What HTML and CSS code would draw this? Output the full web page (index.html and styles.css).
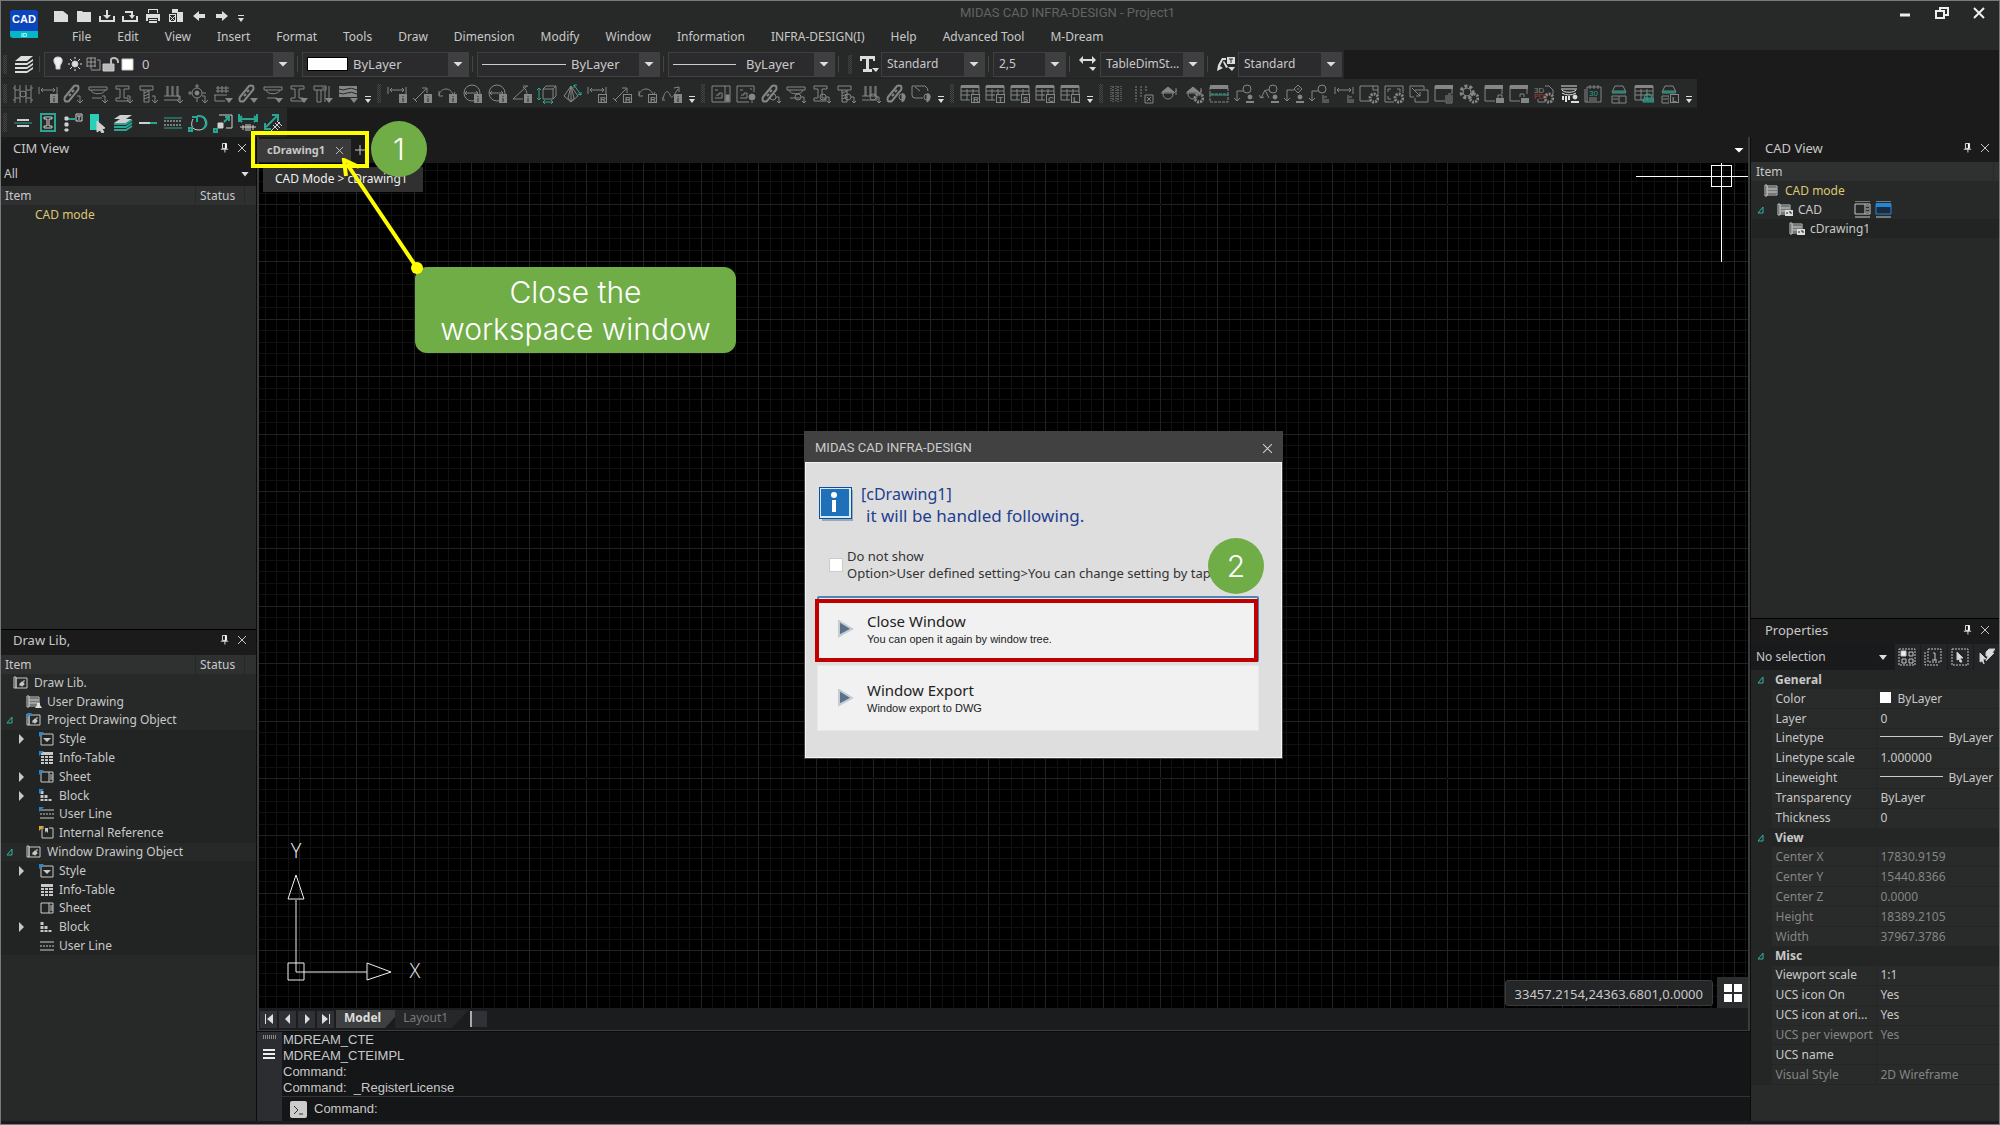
FILE: index.html
```html
<!DOCTYPE html>
<html lang="en">
    <head>
        <title>MIDAS CAD INFRA-DESIGN - Project1</title>

        <meta name="viewport" content="width=device-width" />
        <meta charset="UTF-8" />

        <link rel="stylesheet" href="styles.css">
    </head>

    <body>
        <svg class="sprite">
            <defs>
                <!-- toolbar shapes, 20x20 -->
                <g id="column"><path d="M2 1v18M18 1v18M2 6h5M2 14h5M13 6h5M13 14h5M7 1v18M13 1v18M0 4h2M0 16h2M18 4h2M18 16h2" /><circle cx="10" cy="10" r="3" /></g>
                <g id="dim"><path d="M1 3v7M19 3v7M3 6h14M5 4 3 6l2 2M15 4l2 2-2 2" /></g>
                <g id="diag"><path d="M3 16 14 5M10 4h5v5M1 14l4 4" /></g>
                <g id="arc"><path d="M2 11c2-8 12-8 14 0M2 7v5h4M13 10l3 2 2-4" /></g>
                <g id="circledim"><circle cx="10" cy="9" r="8" /><path d="M3 9h13M5 7 3 9l2 2M14 7l2 2-2 2" /></g>
                <g id="angle"><path d="M1 15 15 2M1 15h10M11 3c3 2 4 5 4 8M11 2l5 0" /></g>
                <g id="cube"><path d="M6 5h10v10H6zM6 5l3-3h10v10l-3 3M16 5l3-3" /><path class="teal" d="M2 4v12M0 6l2-2 2 2M0 14l2 2 2-2M6 18h10M8 16l-2 2 2 2M14 16l2 2-2 2" /></g>
                <g id="pyramid"><path d="M9 2 2 12l7 6 7-6zM9 2v16M9 2l-3 12 3 4 3-4z" /><path class="teal" d="m12 1 7 10M12 4V1h3M16 10l3 1V8" /></g>
                <g id="spline"><path d="M1 15c2-9 5-9 7-4s4 0 8-6M12 4l5-1v5M0 13v3h3" /></g>
                <g id="bar"><path d="m2 13 9-11q2-1 4 0 1 2 0 4L6 17q-2 1-4 0-1-2 0-4zM6 12l2-2M9 8l2-2" stroke-width="2" /></g>
                <g id="deck"><path d="M1 3h18v3H1zM3 6c1 5 13 5 14 0M4 14h10" /></g>
                <g id="ibeam"><path d="M3 2h13v3h-5v9h4v3H3v-3h4V5H3z" /></g>
                <g id="pile"><path d="M2 2h13v4H2zM6 6v12h5V6M6 9l5-2M6 12l5-2M6 15l5-2" /></g>
                <g id="pile2"><path d="M1 2h12v4H1zM4 6v12h4V6M12 6v12M16 2v14M9 4l4 0" /></g>
                <g id="piles"><path d="M4 2v10M9 2v10M14 2v10M1 12h15v4H1M5 2v10M10 2v10M15 2v10" /></g>
                <g id="hatch"><path d="M5 2v7M9 2v7M13 2v7M3 4h13M3 7h13M1 11h13M2 11v6h10" /></g>
                <g id="target"><circle cx="9" cy="9" r="5" /><circle cx="9" cy="9" r="2" fill="currentColor" /><path d="M9 0v4M9 14v4M0 9h4M14 9h4M7 2h4M2 7v4" /></g>
                <g id="terrain"><path d="M1 2h18v11H1z" fill="currentColor" stroke="none" /><path d="M1 5q4 2 8 0t10 1M1 9q4 2 8 0t10 1" stroke="#272928" /></g>
                <g id="frame"><path d="M1 2h18v16H1zM14 2v16M4 6h3M4 14h7V9H8v2h-3" /><path d="M15 11h3v6h-3z" fill="currentColor" /></g>
                <g id="frame2"><path d="M13 18H1V2h17v6M4 6h3M4 14h7V9H8v2h-3M14 5h2" /></g>
                <g id="gauge"><path d="M12 14H4q-3 0-3-3V2h13q3 2 3 5M4 3l5 4" /></g>
                <g id="table"><path d="M1 2h18v14H1zM1 7h18M1 11h18M7 5v11M13 5v11" /><path d="M1 1h18v3H1z" fill="currentColor" stroke="none" /></g>
                <g id="vlines"><path d="M2 2v16M7 2v16M12 2v16" stroke-dasharray="1 1" /><path d="M4 2v16M9 2v16" stroke-dasharray="2 1" /></g>
                <g id="vlinesx"><path d="M2 2v16M7 2v12M12 2v6" stroke-dasharray="2 1" /></g>
                <g id="section"><path d="M2 9h13M15 9l3-3M17 4v7" /><circle cx="9" cy="10" r="5" /><path d="M3 8 9 3l6 5z" fill="currentColor" /></g>
                <g id="split"><path d="M1 2h18v8H1zM1 10v8h18v-8" stroke-dasharray="3 1" /><path d="M1 1h18v4H1z" fill="currentColor" stroke="none" /><path class="teal" d="M1 11h18" /></g>
                <g id="leader"><circle cx="13" cy="5" r="4" /><path d="M9 7H3v10M0 14l3 3 3-3" /></g>
                <g id="leader2"><circle cx="14" cy="5" r="4" /><path d="M2 14 6 6l4 8M7 6h3M0 11l2 3 3-1" /></g>
                <g id="leader3"><path d="m14 1 4 4-4 4-4-4zM10 6H3v11M0 14l3 3 3-3M13 5h2" /></g>
                <g id="sheet"><path d="M11 17H1V2h18v8M14 2v4h5" /></g>
                <g id="corners"><path d="M10 18H1V2h18v7M4 8V5h3M13 5h3v3M4 12v3h3" /></g>
                <g id="export"><path d="M5 13H1V2h14v3M6 6h13v12H6v-4M3 4l8 8M7 12h4V8" /></g>
                <g id="window"><path d="M11 17H1V2h17v8" /><path d="M1 1h18v4H1z" fill="currentColor" stroke="none" /></g>
                <g id="gears"><circle cx="8" cy="8" r="6" stroke-width="3" stroke-dasharray="3 2" /><circle cx="8" cy="8" r="4" /></g>
                <g id="pdf"><path d="M11 2h4l4 4v4M4 15v3h7" /><text x="0" y="9" font-size="8">3D</text><text class="red" x="0" y="15" font-size="7">PDF</text></g>
                <g id="bridge"><path d="M2 2h16M2 5h16M3 6c2 3 12 3 14 0M3 9q7 4 14 0" /><path d="M4 12v4M7 12v6M10 12v4" stroke-width="2" /></g>
                <g id="book"><path d="M3 3h14v15H3zM6 1v4M10 1v4M14 1v4M1 5v13h2M5 14h8M5 16h8" /><text class="tealtext" x="5" y="12" font-size="8">30</text></g>
                <g id="hat"><path d="M3 12h14v7H3zM10 12v7M4 15h5" /><path d="m6 2-3 6h14l-3-6z" /><path class="teal" d="M3 9h14M4 7h12" /></g>
                <g id="hatsmall"><path class="teal" d="m12 10-2 4h8l-2-4zM9 17h11" /><path class="teal" d="M9 15h11v3H9z" /></g>

                <!-- corner badges -->
                <g id="info"><path d="M12 10h8v9h-8z" fill="currentColor" stroke="none" /><path d="M16 12v1M16 14v4" stroke="#272928" /></g>
                <g id="down"><path d="M14 12h3v6M14 16l3 3 3-3" /></g>
                <g id="menu"><path d="M12 14h8l-4 5z" fill="currentColor" stroke="none" /></g>
                <g id="bulb"><circle cx="16" cy="13" r="3" fill="currentColor" /><path d="M15 18h2" /></g>
                <g id="half"><circle cx="16" cy="13" r="3" /><path d="M16 10v8q3-1 3-5t-3-3z" fill="currentColor" /></g>
                <g id="spin"><circle cx="12" cy="13" r="3" /><path d="M15 13h3v5M16 17l2 2 2-2" /></g>
                <g id="gear"><circle cx="15" cy="14" r="4" stroke-width="3" stroke-dasharray="2 1" /><circle cx="15" cy="14" r="2" fill="#272928" stroke="none" /></g>
                <g id="person"><circle cx="16" cy="13" r="2" fill="currentColor" /><path d="M12 17h8v2h-8z" fill="currentColor" stroke="none" /></g>
                <g id="list"><path d="M14 11v8M15 13h3M15 16h5M15 18h5" /></g>
                <g id="lock"><path d="M12 14h8v5h-8z" fill="currentColor" stroke="none" /><path d="M14 14v-3h4v3" /></g>
                <g id="unlock"><path d="M12 14h8v5h-8z" fill="currentColor" stroke="none" /><path d="M11 13v-3h4v3" /></g>
                <g id="trash"><path d="M11 12h8M12 13v6h6v-6M14 13v5M16 13v5M14 10h3" /></g>
                <g id="cross"><path d="M11 11h8v8h-8zM13 13l4 4M17 13l-4 4" /></g>

                <!-- second toolbar line -->
                <g id="centerline"><path d="M4 7h12M4 13h12" stroke-width="2" /><path class="teal" d="M1 10h18" /></g>
                <g id="boxbeam"><path class="teal" d="M3 1h14v17H3z" stroke-width="2" /><path d="M6 4h8v2h-3v7h3v2H6v-2h3V6H6z" /></g>
                <g id="tag"><path class="teal" d="M4 6h8" stroke-width="2" /><path d="M2 4h3v3H2zM2 10h3v3H2zM2 16h3v2H2z" fill="currentColor" /><path d="M13 1h6v7h-6zM14 3h4M16 3v4" /></g>
                <g id="pick"><path class="tealfill" d="M2 1h9v16H2z" /><path d="m9 8 8 7-3 1 2 3-2 1-2-3-3 2z" fill="currentColor" /></g>
                <g id="stack"><path d="M7 2h12l-6 4H1zM7 6h12l-6 4H1z" fill="currentColor" stroke="none" /><path class="teal" d="M1 11h12l6-4M1 14h12l6-4M1 17h12l6-4" stroke-width="2" /></g>
                <g id="line1"><path d="M1 10h11" stroke-width="2" /><path class="teal" d="M12 10h7" stroke-width="2" /></g>
                <g id="lines"><path class="teal" d="M1 5h18M1 15h18" /><path d="M1 8h18M1 12h18" stroke-dasharray="2 1" /></g>
                <g id="rotate"><path d="M9 3c11-1 11 14 2 14S3 10 5 6" /><path class="teal" d="M9 3c10-1 12 9 6 13M4 4h5v5M1 15h3v3H1z" stroke-width="2" /></g>
                <g id="scale"><path d="M6 2h13v13h-6" /><path d="M5 10h5v5H5z" fill="currentColor" /><path class="teal" d="m11 9 5-5M12 4h4v4M1 16h3v3H1z" stroke-width="2" /></g>
                <g id="spread"><path class="teal" d="M1 6h18M4 3 1 6l3 3M16 3l3 3-3 3M1 1v8M19 1v8" stroke-width="2" /><path d="M2 14h16M5 12v5M8 11v7M10 11v7M12 11v7M15 12v5" /></g>
                <g id="spread2"><path class="teal" d="M3 14 14 3M9 2h6v6M2 10v6h6" stroke-width="2" /><path d="m7 19 10-10M10 12l5 5M12 10l5 5M14 8l5 5" /></g>

                <!-- panel chrome -->
                <g id="pin"><path d="M3 1h5v6H3zM1 8h9M6 8v4" /><path d="M7 1v6" stroke-width="2" /></g>
                <g id="close"><path d="m1 1 8 8M9 1 1 9" /></g>
                <g id="open"><path d="M6 1v6H1z" /></g>
                <g id="closed"><path d="M1 0v10l5-5z" fill="currentColor" stroke="none" /></g>

                <!-- tree icons, 16x14 -->
                <g id="t-lib"><path d="M3 2h11v10H3zM1 1h2v11H1zM7 8h3V5h2M6 9h2" /><path d="M7 6h4v4H7z" fill="currentColor" stroke="none" transform="rotate(45 9 8)" /></g>
                <g id="t-draw"><path d="M1 1h2v11H1zM3 2h10v9H3zM5 3v7M7 3v7M9 3v7M11 3v7M3 5h10M3 8h10" /></g>
                <g id="t-user"><path d="M11 8h3v2l2 3H9l2-3z" fill="#ddd" stroke="none" /></g>
                <g id="t-ad"><path d="M8 7h8v6H8z" fill="#ddd" stroke="none" /><path d="M10 9v2M12 9h2v2" stroke="#222" /></g>
                <g id="t-style"><path d="M3 2h12v11H3z" /><path d="M5 6h8l-4 4z" fill="currentColor" stroke="none" /></g>
                <g id="t-table"><path d="M3 1h12v3H3z" fill="currentColor" stroke="none" /><path d="M3 6h3M3 9h3M3 12h3M7 6h3M7 9h3M7 12h3M11 6h4M11 9h4M11 12h4" stroke-width="2" /></g>
                <g id="t-sheet"><path d="M3 2h12v10H3zM11 2v10M12 5h3M12 7h3M12 9h3" /></g>
                <g id="t-block"><path d="M4 2v10M8 6v6M12 10v2" stroke-width="3" stroke-dasharray="3 1" /></g>
                <g id="t-line"><path d="M2 3h14M2 11h14" /><path d="M2 7h14" stroke-dasharray="2 1" /></g>
                <g id="t-ref"><path d="M6 2H4v10h11V2h-4" /><path d="M7 2h3v5L8 5 7 7z" fill="currentColor" stroke="none" /></g>
                <g id="t-mark"><path d="M1 0h5L1 5z" fill="#1f87d6" stroke="none" /></g>
                <g id="t-mark2"><path d="M1 0h5L1 5z" fill="#e0a92a" stroke="none" /></g>
            </defs>
        </svg>

        <div class="app">
            <header class="titlebar">
                <svg class="logo" viewBox="0 0 28 28">
                    <path d="M0 3q0-3 3-3h22q3 0 3 3v18H0z" fill="#0b46bd" />
                    <path d="M0 21h28v7H3q-3 0-3-3z" fill="#06b6c4" />
                    <text x="14" y="13" class="logo-name">CAD</text>
                    <text x="14" y="27" class="logo-sub">ID</text>
                </svg>
                <div class="titlebar-main">
                    <div class="quick">
                        <button aria-label="New"><svg viewBox="0 0 16 14"><path d="M1 2h9l5 4v7H1z" /></svg></button>
                        <button aria-label="Open"><svg viewBox="0 0 16 14"><path d="M1 2h5l1 1h8v10H1z" /></svg></button>
                        <button aria-label="Save"><svg viewBox="0 0 16 14"><path d="M0 7h2v4h12V7h2v6H0zM7 1h2v5h3L8 10 4 6h3z" /></svg></button>
                        <button aria-label="Save as"><svg viewBox="0 0 16 14"><path d="M0 7h2v4h12V7h2v6H0zM3 2h8v4h2l-3 4-3-4h2V4H3z" /></svg></button>
                        <button aria-label="Print"><svg viewBox="0 0 16 14"><path d="M3 0h10v4h-1V1H4v3H3zM1 5h14v7h-2V9H3v3H1zM4 10h8v1H4zM4 12h8v2H4z" /></svg></button>
                        <button aria-label="Plot"><svg viewBox="0 0 16 14"><path d="M4 0h6v3h5v10H9V4H4zM1 5h7v8H1zM2 6v6h5V6z" fill-rule="evenodd" /><path d="m2 7 5 5M7 7l-5 5" stroke="#ddd" /></svg></button>
                        <button aria-label="Undo"><svg viewBox="0 0 16 14"><path d="M2 7l6-5v3h6v4H8v3z" /></svg></button>
                        <button aria-label="Redo"><svg viewBox="0 0 16 14"><path d="M14 7 8 2v3H2v4h6v3z" /></svg></button>
                        <button aria-label="Customize" class="quick-more"><svg viewBox="0 0 8 8"><path d="M1 0h6v1H1zM1 3h6L4 7z" /></svg></button>
                    </div>
                    <nav class="menu">
                        <a href="#">File</a><a href="#">Edit</a><a href="#">View</a><a href="#">Insert</a><a href="#">Format</a><a href="#">Tools</a><a href="#">Draw</a><a href="#">Dimension</a><a href="#">Modify</a><a href="#">Window</a><a href="#">Information</a><a href="#">INFRA-DESIGN(I)</a><a href="#">Help</a><a href="#">Advanced Tool</a><a href="#">M-Dream</a>
                    </nav>
                </div>
                <h1>MIDAS CAD INFRA-DESIGN - Project1</h1>
                <div class="window-buttons">
                    <button aria-label="Minimize"><svg viewBox="0 0 14 12"><path d="M2 8h10" stroke-width="3" /></svg></button>
                    <button aria-label="Restore"><svg viewBox="0 0 14 12"><path d="M1 4h8v7H1zM5 4V1h8v7H9" stroke-width="2" /></svg></button>
                    <button aria-label="Close"><svg viewBox="0 0 14 12"><path d="m2 1 10 10M12 1 2 11" stroke-width="2" /></svg></button>
                </div>
            </header>

            <div class="strip strip-properties">
                <span class="grip"></span>
                <button class="strip-icon" aria-label="Layers"><svg viewBox="0 0 20 18"><path d="M7 1h12l-6 5H1zM1 8h12l6-4v2l-6 4H1zM1 12h12l6-4v2l-6 4H1zM1 16h12l6-4v2l-6 4H1z" /></svg></button>
                <span class="sep"></span>
                <div class="combo combo-layer">
                    <svg width="84" height="16" viewBox="0 0 84 16">
                        <path d="M8 1q5 0 4 5l-2 4v3H6v-3L4 6q-1-5 4-5z" fill="#eee" />
                        <circle cx="25" cy="8" r="3" fill="#ddd" />
                        <path d="M25 1v2M25 13v2M18 8h2M30 8h2M20 3l2 2M28 11l2 2M30 3l-2 2M22 11l-2 2" stroke="#ddd" />
                        <path d="M37 2h9M37 6h9M37 10h9M37 2v9M41 1v12M45 2v9M47 4h3v10h-9" stroke="#999" fill="none" />
                        <path d="M53 8h11v7H53z" fill="#bbb" /><path d="M61 8V4q0-2 3-2t4 3v2" stroke="#bbb" stroke-width="2" fill="none" />
                        <path d="M72 3h11v11H72z" fill="#fff" />
                    </svg>
                    <select aria-label="Layer"><option>0</option></select>
                    <i class="arrow"></i>
                </div>
                <span class="sep"></span>
                <div class="combo combo-color"><span class="swatch"></span><select aria-label="Color"><option>ByLayer</option></select><i class="arrow"></i></div>
                <span class="sep"></span>
                <div class="combo combo-linetype"><span class="sample"></span><select aria-label="Linetype"><option>ByLayer</option></select><i class="arrow"></i></div>
                <span class="sep"></span>
                <div class="combo combo-weight"><span class="sample"></span><select aria-label="Lineweight"><option>ByLayer</option></select><i class="arrow"></i></div>
                <span class="sep"></span>
                <span class="grip grip-inner"></span>
                <button class="strip-icon" aria-label="Text style"><svg viewBox="0 0 20 18"><path d="M1 1h15v5h-2V4h-4v10h3v3H4v-3h3V4H3v2H1zM13 13h7l-3 4z" /></svg></button>
                <div class="combo combo-style"><select aria-label="Text style"><option>Standard</option></select><i class="arrow"></i></div>
                <span class="sep"></span>
                <div class="combo combo-height"><select aria-label="Text height"><option>2,5</option></select><i class="arrow"></i></div>
                <span class="sep"></span>
                <button class="strip-icon" aria-label="Dimension style"><svg viewBox="0 0 20 18"><path d="M1 5l4-4v3h9V1l4 4-4 4V6H5v3zM11 12h7l-3 4z" /></svg></button>
                <div class="combo combo-style"><select aria-label="Dimension style"><option>TableDimSt...</option></select><i class="arrow"></i></div>
                <span class="sep"></span>
                <button class="strip-icon" aria-label="Leader style"><svg viewBox="0 0 20 18"><path d="M1 16l1-6 4-7h4v2H7l-3 6 3 2zM8 6l4 6-2 1-3-6zM12 12h7l-3 4z" /><path d="M11 2h8v7h-8z" /><path d="M13 4h4M15 4v4" stroke="#272928" /></svg></button>
                <div class="combo combo-style"><select aria-label="Leader style"><option>Standard</option></select><i class="arrow"></i></div>
            </div>
            <div class="strip" id="strip-tools"></div>
            <div class="strip" id="strip-edit"></div>

            <main class="main">
                <aside class="side side-left">
                    <section class="panel">
                        <h2>CIM View <button aria-label="Pin"><svg viewBox="0 0 11 13"><use href="#pin" /></svg></button><button aria-label="Close"><svg viewBox="0 0 10 10"><use href="#close" /></svg></button></h2>
                        <div class="filter"><select aria-label="Filter"><option>All</option></select><i class="arrow"></i></div>
                        <div class="columns"><span>Item</span><span>Status</span></div>
                        <ul class="tree"><li class="mode no-icon">CAD mode</li></ul>
                    </section>
                    <section class="panel">
                        <h2>Draw Lib, <button aria-label="Pin"><svg viewBox="0 0 11 13"><use href="#pin" /></svg></button><button aria-label="Close"><svg viewBox="0 0 10 10"><use href="#close" /></svg></button></h2>
                        <div class="columns"><span>Item</span><span>Status</span></div>
                        <ul class="tree tree-lib">
                            <li><svg viewBox="0 0 16 14"><use href="#t-lib" /></svg>Draw Lib.</li>
                            <li class="sub"><i></i><svg viewBox="0 0 16 14"><use href="#t-draw" /><use href="#t-user" /></svg>User Drawing</li>
                            <li class="sub"><i><svg class="open" viewBox="0 0 8 8"><use href="#open" /></svg></i><svg viewBox="0 0 16 14"><use href="#t-lib" /><use href="#t-mark" /></svg>Project Drawing Object</li>
                            <li class="leaf"><i><svg class="closed" viewBox="0 0 6 10"><use href="#closed" /></svg></i><svg viewBox="0 0 16 14"><use href="#t-style" /><use href="#t-mark" /></svg>Style</li>
                            <li class="leaf"><i></i><svg viewBox="0 0 16 14"><use href="#t-table" /><use href="#t-mark" /></svg>Info-Table</li>
                            <li class="leaf"><i><svg class="closed" viewBox="0 0 6 10"><use href="#closed" /></svg></i><svg viewBox="0 0 16 14"><use href="#t-sheet" /><use href="#t-mark" /></svg>Sheet</li>
                            <li class="leaf"><i><svg class="closed" viewBox="0 0 6 10"><use href="#closed" /></svg></i><svg viewBox="0 0 16 14"><use href="#t-block" /><use href="#t-mark" /></svg>Block</li>
                            <li class="leaf"><i></i><svg viewBox="0 0 16 14"><use href="#t-line" /><use href="#t-mark" /></svg>User Line</li>
                            <li class="leaf"><i></i><svg viewBox="0 0 16 14"><use href="#t-ref" /><use href="#t-mark2" /></svg>Internal Reference</li>
                            <li class="sub"><i><svg class="open" viewBox="0 0 8 8"><use href="#open" /></svg></i><svg viewBox="0 0 16 14"><use href="#t-lib" /></svg>Window Drawing Object</li>
                            <li class="leaf"><i><svg class="closed" viewBox="0 0 6 10"><use href="#closed" /></svg></i><svg viewBox="0 0 16 14"><use href="#t-style" /><use href="#t-mark" /></svg>Style</li>
                            <li class="leaf"><i></i><svg viewBox="0 0 16 14"><use href="#t-table" /></svg>Info-Table</li>
                            <li class="leaf"><i></i><svg viewBox="0 0 16 14"><use href="#t-sheet" /></svg>Sheet</li>
                            <li class="leaf"><i><svg class="closed" viewBox="0 0 6 10"><use href="#closed" /></svg></i><svg viewBox="0 0 16 14"><use href="#t-block" /></svg>Block</li>
                            <li class="leaf"><i></i><svg viewBox="0 0 16 14"><use href="#t-line" /></svg>User Line</li>
                        </ul>
                    </section>
                </aside>

                <div class="center">
                    <div class="workspace">
                        <div class="tabs">
                            <div class="tab">cDrawing1 <button aria-label="Close tab"><svg viewBox="0 0 10 10"><use href="#close" /></svg></button></div>
                            <button class="tab-add" aria-label="New tab"><svg viewBox="0 0 10 10"><path d="M5 0v10M0 5h10" /></svg></button>
                            <button class="tab-list" aria-label="Tab list"><i class="arrow"></i></button>
                        </div>
                        <div class="canvas">
                            <svg class="canvas-grid">
                                <defs>
                                    <pattern id="grid" x="40" y="41" width="287" height="287" patternUnits="userSpaceOnUse">
                                        <g transform="translate(0.5 0.5)">
                                            <path class="minor" d="M11 0v287M23 0v287M34 0v287M46 0v287M69 0v287M80 0v287M92 0v287M103 0v287M126 0v287M138 0v287M149 0v287M161 0v287M184 0v287M195 0v287M207 0v287M218 0v287M241 0v287M253 0v287M264 0v287M276 0v287M0 11h287M0 23h287M0 34h287M0 46h287M0 69h287M0 80h287M0 92h287M0 103h287M0 126h287M0 138h287M0 149h287M0 161h287M0 184h287M0 195h287M0 207h287M0 218h287M0 241h287M0 253h287M0 264h287M0 276h287" />
                                            <path class="major" d="M0 0v287M57 0v287M115 0v287M172 0v287M230 0v287M0 0h287M0 57h287M0 115h287M0 172h287M0 230h287" />
                                        </g>
                                    </pattern>
                                </defs>
                                <rect width="100%" height="100%" fill="url(#grid)" stroke="none" />
                            </svg>
                            <div class="breadcrumb">CAD Mode &gt; cDrawing1</div>
                            <svg class="crosshair" viewBox="0 0 112 99"><path d="M0 13h112M85 0v99M75 2h20v21H75z" /></svg>
                            <svg class="ucs" viewBox="0 0 156 150">
                                <path d="M27 129V57M19 56h16L27 32zM19 120h16v17H19zM27 129h71M98 120v17l24-8z" />
                                <text x="27" y="15">Y</text>
                                <text x="146" y="135">X</text>
                            </svg>
                            <div class="readout">33457.2154,24363.6801,0.0000</div>
                            <button class="tiles" aria-label="Viewports"><svg viewBox="0 0 18 18"><path d="M0 0h8v8H0zM10 0h8v8h-8zM0 10h8v8H0zM10 10h8v8h-8z" /></svg></button>
                        </div>
                        <div class="layouts">
                            <button aria-label="First"><svg viewBox="0 0 10 10"><path d="M1 0h1v10H1zM9 0v10L3 5z" /></svg></button>
                            <button aria-label="Previous"><svg viewBox="0 0 10 10"><path d="M7 0v10L2 5z" /></svg></button>
                            <button aria-label="Next"><svg viewBox="0 0 10 10"><path d="M3 0v10l5-5z" /></svg></button>
                            <button aria-label="Last"><svg viewBox="0 0 10 10"><path d="M8 0h1v10H8zM1 0v10l6-5z" /></svg></button>
                            <a class="layout active" href="#">Model</a>
                            <a class="layout" href="#">Layout1</a>
                            <span class="scroll-end"></span>
                        </div>
                    </div>
                    <div class="command">
                        <div class="command-gutter">
                            <span></span>
                            <svg viewBox="0 0 12 11"><path d="M0 0h12v2H0zM0 4h12v2H0zM0 8h12v2H0z" /></svg>
                        </div>
                        <div class="command-body">
                            <pre>MDREAM_CTE
MDREAM_CTEIMPL
Command:
Command:  _RegisterLicense</pre>
                            <div class="prompt">
                                <svg viewBox="0 0 17 17"><rect width="17" height="17" rx="2" fill="#ccc" /><path d="m4 5 4 4-4 4M9 13h4" stroke="#333" fill="none" /></svg>
                                <label for="command">Command:</label>
                                <input id="command" type="text" />
                            </div>
                        </div>
                    </div>
                </div>

                <aside class="side side-right">
                    <section class="panel panel-cad">
                        <h2>CAD View <button aria-label="Pin"><svg viewBox="0 0 11 13"><use href="#pin" /></svg></button><button aria-label="Close"><svg viewBox="0 0 10 10"><use href="#close" /></svg></button></h2>
                        <div class="columns"><span>Item</span></div>
                        <ul class="tree">
                            <li class="mode"><svg viewBox="0 0 16 14"><use href="#t-draw" /></svg>CAD mode</li>
                            <li class="sub"><i><svg class="open" viewBox="0 0 8 8"><use href="#open" /></svg></i><svg viewBox="0 0 16 14"><use href="#t-draw" /><use href="#t-ad" /></svg>CAD
                                <button class="row-tool" aria-label="Sheet"><svg viewBox="0 0 17 17"><path d="M1 0h15M1 16h15M1 3h15v10H1zM11 3v10M12 5h3M12 8h3M12 11h3" /></svg></button>
                                <button class="row-tool" aria-label="Window"><svg viewBox="0 0 17 17"><path d="M1 0h15M1 16h15" /><path d="M1 3h15v10H1z" fill="#1a2b3c" stroke="#1f87d6" /><path d="M1 2h15v4H1z" fill="#1f87d6" stroke="none" /></svg></button>
                            </li>
                            <li class="leaf"><i></i><svg viewBox="0 0 16 14"><use href="#t-draw" /><use href="#t-ad" /></svg>cDrawing1</li>
                        </ul>
                    </section>
                    <section class="panel panel-props">
                        <h2>Properties <button aria-label="Pin"><svg viewBox="0 0 11 13"><use href="#pin" /></svg></button><button aria-label="Close"><svg viewBox="0 0 10 10"><use href="#close" /></svg></button></h2>
                        <div class="selection">
                            <div class="filter"><select aria-label="Selection"><option>No selection</option></select><i class="arrow"></i></div>
                            <button aria-label="Toggle"><svg viewBox="0 0 18 18"><path d="M1 1h16v16H1z" stroke-dasharray="2 1" /><path d="M11 4h4v4h-4zM4 11h4v4H4zM11 11h4v4h-4z" /><path d="M3 3h5v5H3z" fill="#eee" /></svg></button>
                            <button aria-label="Quick select"><svg viewBox="0 0 18 18"><path d="M4 1h13v13H4zM1 4v13h13" stroke-dasharray="2 1" /><path d="M9 5h2v7M8 12h5" /></svg></button>
                            <button aria-label="Select"><svg viewBox="0 0 18 18"><path d="M1 1h16v16H1z" stroke-dasharray="2 1" /><path d="m6 4 6 6H9l2 4H9l-1-3-2 1z" fill="#ddd" /></svg></button>
                            <button aria-label="Pick"><svg viewBox="0 0 18 18"><path d="M3 5l6 6H6l1 5-2-3-2 1zM9 4l3-3h6l-3 4h2l-8 8 2-5H9z" fill="#ddd" /></svg></button>
                        </div>
                        <table class="props">
                            <colgroup><col class="col-toggle" /><col class="col-name" /><col /></colgroup>
                            <tr class="group"><th><svg class="open" viewBox="0 0 8 8"><use href="#open" /></svg></th><th colspan="2">General</th></tr>
                            <tr><td></td><th>Color</th><td><span class="box"></span>ByLayer</td></tr>
                            <tr><td></td><th>Layer</th><td>0</td></tr>
                            <tr><td></td><th>Linetype</th><td><span class="line"></span>ByLayer</td></tr>
                            <tr><td></td><th>Linetype scale</th><td>1.000000</td></tr>
                            <tr><td></td><th>Lineweight</th><td><span class="line"></span>ByLayer</td></tr>
                            <tr><td></td><th>Transparency</th><td>ByLayer</td></tr>
                            <tr><td></td><th>Thickness</th><td>0</td></tr>
                            <tr class="group"><th><svg class="open" viewBox="0 0 8 8"><use href="#open" /></svg></th><th colspan="2">View</th></tr>
                            <tr class="off"><td></td><th>Center X</th><td>17830.9159</td></tr>
                            <tr class="off"><td></td><th>Center Y</th><td>15440.8366</td></tr>
                            <tr class="off"><td></td><th>Center Z</th><td>0.0000</td></tr>
                            <tr class="off"><td></td><th>Height</th><td>18389.2105</td></tr>
                            <tr class="off"><td></td><th>Width</th><td>37967.3786</td></tr>
                            <tr class="group"><th><svg class="open" viewBox="0 0 8 8"><use href="#open" /></svg></th><th colspan="2">Misc</th></tr>
                            <tr><td></td><th>Viewport scale</th><td>1:1</td></tr>
                            <tr><td></td><th>UCS icon On</th><td>Yes</td></tr>
                            <tr><td></td><th>UCS icon at ori...</th><td>Yes</td></tr>
                            <tr class="off"><td></td><th>UCS per viewport</th><td>Yes</td></tr>
                            <tr><td></td><th>UCS name</th><td></td></tr>
                            <tr class="off"><td></td><th>Visual Style</th><td>2D Wireframe</td></tr>
                        </table>
                        <div class="props-rest"></div>
                    </section>
                </aside>
            </main>

            <div class="dialog" role="dialog" aria-labelledby="dialog-title">
                <div class="dialog-bar"><span id="dialog-title">MIDAS CAD INFRA-DESIGN</span><button aria-label="Close"><svg viewBox="0 0 10 10"><use href="#close" /></svg></button></div>
                <div class="dialog-body">
                    <div class="message">
                        <svg viewBox="0 0 34 34"><path d="M3 3h31v31H3z" fill="#9aa9b8" /><path d="M0 0h33v32H0z" fill="#0f4f94" /><path d="M1 1h31v30H1z" fill="#d5eaf7" /><path d="M2 2h28v27H2z" fill="#1f70b8" /><circle cx="15" cy="8" r="3" fill="#fff" /><path d="M13 13h4v12h-4z" fill="#fff" /></svg>
                        <p>[cDrawing1]<br /><span>it will be handled following.</span></p>
                    </div>
                    <label class="hide-next"><input type="checkbox" /><span>Do not show<br />Option&gt;User defined setting&gt;You can change setting by tap I</span></label>
                    <button class="choice focused"><svg viewBox="0 0 16 18"><path d="M1 1v15l13-7z" /></svg><span><b>Close Window</b><small>You can open it again by window tree.</small></span></button>
                    <button class="choice"><svg viewBox="0 0 16 18"><path d="M1 1v15l13-7z" /></svg><span><b>Window Export</b><small>Window export to DWG</small></span></button>
                </div>
            </div>

            <!-- walkthrough overlay -->
            <div class="mark mark-tab"></div>
            <div class="mark mark-choice"></div>
            <div class="step step-1">1</div>
            <div class="step step-2">2</div>
            <div class="callout">Close the<br />workspace window</div>
            <svg class="pointer" viewBox="0 0 86 120"><path d="M76 110 6 6M5 18 3 2l15 7" /><circle cx="76" cy="110" r="6" /></svg>
        </div>

        <script src="toolbars.js"></script>
    </body>
</html>
```
FILE: styles.css
```css
* {
    box-sizing: border-box;
}

body {
    margin: 0;
    background: #1b1b1b;
    color: #c8c8c8;
    font: 12px/16px 'Noto Sans', sans-serif;
}

h1,
h2,
p,
ul,
pre {
    margin: 0;
    padding: 0;
    font-size: inherit;
    font-weight: normal;
}

button,
select,
input {
    margin: 0;
    padding: 0;
    border: 0;
    background: none;
    color: inherit;
    font: inherit;
    appearance: none;
}

select {
    flex: 1;
    min-width: 0;
    outline: none;
}

a {
    color: inherit;
    text-decoration: none;
}

svg {
    display: block;
    flex: none;
    fill: none;
    stroke: currentColor;
}

.sprite {
    display: none;
}

.teal {
    stroke: #2aa592;
}

.tealfill {
    fill: #2ad0b5;
    stroke: none;
}

.tealtext {
    fill: #2aa592;
    stroke: none;
}

.red {
    fill: #b23a32;
}

text {
    fill: currentColor;
    stroke: none;
    font-family: 'Liberation Sans', sans-serif;
}

.arrow {
    flex: none;
    width: 10px;
    height: 5px;
    background: #ddd;
    clip-path: polygon(0 0, 100% 0, 50% 100%);
}

.app {
    position: relative;
    display: flex;
    flex-direction: column;
    min-height: 100vh;
    border: 1px solid #777a78;
    overflow: hidden;
}

/* title bar */

.titlebar {
    display: flex;
    height: 49px;
    padding-left: 9px;
    background: #272928;
}

.logo {
    width: 28px;
    height: 28px;
    margin-top: 9px;
    stroke: none;
}

.logo-name {
    fill: #fff;
    font-size: 11px;
    font-weight: bold;
    text-anchor: middle;
}

.logo-sub {
    fill: #bff;
    font-size: 6px;
    font-weight: bold;
    text-anchor: middle;
}

.titlebar-main {
    flex: 1;
}

.quick {
    display: flex;
    gap: 7px;
    align-items: center;
    height: 26px;
    margin: 2px 0 0 15px;
}

.quick svg {
    width: 16px;
    height: 14px;
    fill: #ddd;
    stroke: none;
}

.quick .quick-more svg {
    width: 8px;
    height: 8px;
    margin-top: 6px;
}

.menu {
    display: flex;
    gap: 26px;
    margin-left: 34px;
}

.titlebar h1 {
    position: absolute;
    top: 4px;
    left: 959px;
    color: #626362;
    font-family: Roboto, sans-serif;
    font-size: 13px;
}

.window-buttons {
    display: flex;
    gap: 23px;
    align-items: flex-start;
    padding: 6px 13px 0 0;
}

.window-buttons svg {
    width: 14px;
    height: 12px;
    color: #eee;
}

/* toolbars */

.strip {
    display: flex;
    align-self: flex-start;
    align-items: center;
    height: 29px;
    padding-left: 1px;
    border-bottom: 1px solid #222;
    background: #272928;
    color: #858786;
}

.strip-properties {
    padding-right: 2px;
    color: #c8c8c8;
}

.grip {
    flex: none;
    width: 4px;
    height: 19px;
    margin: 0 3px 0 1px;
    background: repeating-conic-gradient(#454746 0 25%, #272928 0 50%) 0 0 / 2px 2px;
}

.grip-inner {
    margin-left: 5px;
}

.sep {
    width: 1px;
    height: 16px;
    margin: 0 4px 0 3px;
    background: #444;
}

.strip-icon {
    padding: 0 2px 0 4px;
}

.strip-icon svg {
    width: 20px;
    height: 18px;
    fill: #ddd;
    stroke: none;
}

.combo {
    display: flex;
    align-items: center;
    height: 25px;
    border: 1px solid #3f3f42;
    background: linear-gradient(to left, #3f3f42 20px, #2b2b2d 20px);
}

.combo select {
    padding-left: 5px;
    height: 21px;
    font-size: 13px;
}

.combo .arrow {
    margin: 0 5px;
}

.combo-layer {
    width: 250px;
    padding-left: 5px;
}

.combo-layer select {
    padding-left: 8px;
}

.combo-color,
.combo-weight {
    width: 167px;
    padding-left: 4px;
}

.combo-linetype {
    width: 183px;
    padding-left: 4px;
}

.combo-style {
    width: 104px;
}

.combo-height {
    width: 73px;
}

/* the long dimension style name needs the full width */
.combo-style select,
.combo-height select {
    font-size: 12px;
}

.swatch {
    width: 41px;
    height: 14px;
    border: 1px solid #000;
    background: #fff;
}

.sample {
    width: 84px;
    height: 1px;
    background: #ccc;
}

.combo-weight .sample {
    width: 63px;
    margin-right: 5px;
}

.tool {
    width: 25px;
    height: 24px;
    padding: 1px 0 0 3px;
}

.tool svg {
    width: 20px;
    height: 20px;
}

.tool.bright {
    color: #ddd;
}

.more {
    width: 16px;
    padding: 14px 0 0 4px;
}

.more svg {
    width: 8px;
    height: 8px;
    fill: #ddd;
    stroke: none;
}

#strip-edit {
    color: #d0d0d0;
    padding-right: 2px;
    border-bottom: 0;
}

/* docked panels */

.main {
    display: grid;
    grid-template-columns: 255px 1fr 248px;
    flex: 1;
    margin-bottom: 3px;
}

.side {
    display: flex;
    flex-direction: column;
    background: #272928;
}

.panel {
    display: flex;
    flex: 1 1 0;
    flex-direction: column;
}

.panel + .panel {
    border-top: 1px solid #000;
}

.panel-cad {
    flex-grow: 24;
}

.panel-props {
    flex-grow: 25;
}

.panel h2 {
    display: flex;
    gap: 8px;
    align-items: center;
    height: 25px;
    padding: 0 9px 4px 12px;
    background: #1b1b1b;
    font-size: 13px;
}

.side-right h2 {
    padding-left: 14px;
}

.panel h2 button:first-of-type {
    margin-left: auto;
}

.panel h2 svg {
    width: 10px;
    height: 10px;
}

.panel h2 button:first-of-type svg {
    width: 9px;
    height: 12px;
    color: #fff;
}

.filter {
    display: flex;
    align-items: center;
    height: 24px;
    padding: 0 7px 0 3px;
    background: #1b1b1b;
}

.filter .arrow {
    width: 8px;
}

.columns {
    display: grid;
    grid-template-columns: 1fr 49px;
    height: 19px;
    padding-right: 11px;
    background: #2f3131;
    line-height: 19px;
}

.columns span {
    padding-left: 4px;
    border-right: 1px solid #272928;
}

.side-right .columns {
    grid-template-columns: 1fr;
    padding: 0 5px 0 1px;
}

.tree {
    list-style: none;
}

.side-right .tree {
    padding-left: 1px;
}

.tree li {
    display: flex;
    align-items: center;
    height: 19px;
    padding-left: 12px;
    white-space: nowrap;
}

.tree li > svg {
    width: 16px;
    height: 14px;
    margin-right: 5px;
}

.tree i {
    width: 20px;
}

.tree .sub {
    padding-left: 5px;
}

.tree .leaf {
    padding-left: 17px;
    background: #222424;
}

.tree .mode {
    color: #dcc873;
}

.tree .mode svg {
    color: #c8c8c8;
}

.tree .no-icon {
    padding-left: 34px;
}

.tree-lib {
    display: grid;
    grid-auto-rows: 1fr;
    height: 282px;
}

.tree-lib li {
    height: auto;
}

.open {
    width: 8px;
    height: 8px;
    color: #2fb5a0;
}

.closed {
    width: 6px;
    height: 10px;
}

.row-tool {
    margin-left: 4px;
}

.row-tool:first-of-type {
    margin-left: 32px;
}

.row-tool svg {
    width: 17px;
    height: 17px;
}

.selection {
    display: flex;
    height: 26px;
    background: #232526;
}

.selection .filter {
    width: 143px;
    height: 26px;
    padding-left: 5px;
    background: #191a1c;
}

.selection button {
    flex: 1;
    padding-left: 3px;
    border-left: 1px solid #1b1b1b;
}

.selection svg {
    width: 18px;
    height: 18px;
}

.props {
    width: 100%;
    height: 415px;
    border-collapse: collapse;
    table-layout: fixed;
    line-height: 16px;
}

.col-toggle {
    width: 20px;
}

.col-name {
    width: 105px;
}

.props th,
.props td {
    overflow: hidden;
    padding: 0 0 0 4px;
    border: solid #242525;
    border-width: 0 0 1px 1px;
    background: #292a2a;
    font-weight: normal;
    text-align: left;
    white-space: nowrap;
}

.props tr > :first-child {
    padding-left: 6px;
    border: 0;
    background: #242626;
}

.props .group th {
    border: 0;
    background: #242626;
    font-weight: bold;
}

.off {
    color: #858585;
}

.props .box {
    display: inline-block;
    width: 11px;
    height: 11px;
    margin: 0 7px 0 -1px;
    background: #fff;
}

.props .line {
    display: inline-block;
    width: 63px;
    height: 1px;
    margin: 0 6px 5px -1px;
    background: #ccc;
}

.props-rest {
    flex: 1;
    background: #292a2a;
}

/* drawing area */

.center {
    display: flex;
    flex-direction: column;
    border: solid #0c0c0c;
    border-width: 0 1px;
}

.workspace {
    display: flex;
    flex: 1;
    flex-direction: column;
    border: solid #3a3b3c;
    border-width: 0 2px 1px;
}

.tabs {
    display: flex;
    align-items: center;
    height: 26px;
    background: #1b1b1b;
}

.tab {
    display: flex;
    gap: 10px;
    align-items: center;
    height: 23px;
    padding: 0 7px 0 8px;
    background: #3a3a3b;
    font-size: 11px;
    font-weight: bold;
}

.tab svg {
    width: 9px;
    height: 9px;
}

.tab-add {
    padding: 0 4px;
}

.tab-add svg {
    width: 10px;
    height: 10px;
}

.tab-list {
    margin-left: auto;
    padding-right: 4px;
}

.tab-list .arrow {
    display: block;
    background: #fff;
}

.canvas {
    position: relative;
    flex: 1;
    background: #000;
}

.canvas-grid {
    position: absolute;
    width: 100%;
    height: 100%;
    shape-rendering: crispEdges;
}

.minor {
    stroke: #111;
}

.major {
    stroke: #222;
}

.breadcrumb {
    position: absolute;
    top: 4px;
    left: 4px;
    padding: 4px 15px 5px 12px;
    background: #303030;
    color: #eee;
}

.crosshair {
    position: absolute;
    top: 0;
    right: 0;
    width: 112px;
    height: 99px;
    color: #fff;
    shape-rendering: crispEdges;
}

.ucs {
    position: absolute;
    bottom: 15px;
    left: 10px;
    width: 156px;
    height: 150px;
    overflow: visible;
    color: #eee;
}

.ucs text {
    font-family: 'Open Sans', sans-serif;
    font-size: 20px;
    font-weight: 300;
    text-anchor: middle;
}

.readout {
    position: absolute;
    right: 35px;
    bottom: 2px;
    padding: 5px 9px 3px;
    border: 1px solid #3a3b3c;
    border-radius: 3px;
    background: #232526;
    font-size: 13px;
}

.tiles {
    position: absolute;
    right: 0;
    bottom: 0;
    width: 31px;
    height: 31px;
    padding-left: 7px;
    background: #2c2d2f;
}

.tiles svg {
    width: 18px;
    height: 18px;
    fill: #fff;
    stroke: none;
}

.layouts {
    display: flex;
    gap: 2px;
    align-items: center;
    height: 22px;
    padding-left: 1px;
    background: #1b1c1e;
}

.layouts button {
    width: 17px;
    height: 17px;
    padding-left: 4px;
    background: #303136;
}

.layouts button svg {
    width: 10px;
    height: 10px;
    fill: #ddd;
    stroke: none;
}

.layout {
    height: 18px;
    padding: 0 20px 0 8px;
    background: #252728;
    clip-path: polygon(0 0, 100% 0, calc(100% - 16px) 100%, 0 100%);
    color: #77797b;
}

.layout.active {
    margin-right: -8px;
    background: #3e3f40;
    color: #ddd;
    font-weight: bold;
}

.scroll-end {
    width: 17px;
    height: 16px;
    border-left: 2px solid #aaa;
    background: #303136;
}

.command {
    display: flex;
    height: 90px;
    border-top: 1px solid #0c0c0c;
    background: #151618;
    font-family: 'Liberation Sans', sans-serif;
    font-size: 13px;
}

.command-gutter {
    width: 25px;
    padding: 3px 6px;
    background: #2c2d31;
}

.command-gutter span {
    display: block;
    height: 4px;
    margin-bottom: 10px;
    background: repeating-linear-gradient(to right, #888 0 1px, #2c2d31 1px 2px);
}

.command-gutter svg {
    width: 12px;
    height: 11px;
    fill: #eee;
    stroke: none;
}

.command-body {
    display: flex;
    flex: 1;
    flex-direction: column;
}

.command pre {
    height: 64px;
    padding-left: 1px;
    font-family: inherit;
}

.prompt {
    display: flex;
    flex: 1;
    gap: 7px;
    align-items: center;
    padding-left: 8px;
    border-top: 1px solid #333;
}

.prompt svg {
    width: 17px;
    height: 17px;
    stroke: none;
}

.prompt input {
    flex: 1;
    outline: none;
}

/* dialog */

.dialog {
    position: absolute;
    top: 430px;
    left: 803px;
    width: 479px;
    border: 1px solid #414141;
    background: #dedede;
    color: #333;
}

.dialog-bar {
    display: flex;
    align-items: center;
    justify-content: space-between;
    height: 30px;
    padding: 2px 9px 0 10px;
    background: #414141;
    color: #ccc;
    font-family: Roboto, sans-serif;
    font-size: 13px;
}

.dialog-bar svg {
    width: 11px;
    height: 11px;
}

.dialog-body {
    padding: 20px 22px 23px 11px;
    border: 1px solid #f4f4f4;
}

.message {
    display: flex;
    gap: 8px;
    color: #1e3f8f;
    font-size: 16px;
    line-height: 22px;
}

.message svg {
    width: 34px;
    height: 34px;
    margin: 4px 0 0 2px;
    stroke: none;
}

.message span {
    padding-left: 5px;
    font-size: 17px;
}

.hide-next {
    display: flex;
    gap: 4px;
    align-items: center;
    margin: 21px 0 14px 12px;
    font-size: 13px;
    line-height: 17px;
    white-space: nowrap;
}

.hide-next input {
    width: 14px;
    height: 14px;
    border: 1px solid #ccc;
    background: #fff;
}

.choice {
    display: flex;
    gap: 13px;
    align-items: center;
    width: 100%;
    height: 66px;
    margin-bottom: 3px;
    padding-left: 20px;
    border: 1px solid #e8e8e8;
    background: #f1f1f1;
    color: #222;
    text-align: left;
}

.choice.focused {
    padding-left: 19px;
    border: 2px solid #4a86b8;
    border-radius: 2px;
}

.choice svg {
    width: 16px;
    height: 18px;
    fill: #5a7189;
    stroke: #c4ccd4;
    stroke-width: 2;
}

.choice b,
.choice small {
    display: block;
    font-weight: normal;
}

.choice b {
    font-size: 15px;
    line-height: 20px;
}

.choice small {
    font: 11px/16px 'Liberation Sans', sans-serif;
}

/* walkthrough */

.mark {
    position: absolute;
}

.mark-tab {
    top: 130px;
    left: 250px;
    width: 118px;
    height: 37px;
    border: 4px solid #ff0;
}

.mark-choice {
    top: 598px;
    left: 814px;
    width: 443px;
    height: 63px;
    border: 4px solid #c00000;
}

.step {
    position: absolute;
    width: 56px;
    height: 56px;
    border-radius: 50%;
    background: #70ad47;
    color: #fff;
    font: 300 30px/56px Inter, sans-serif;
    text-align: center;
}

.step-1 {
    top: 120px;
    left: 370px;
}

.step-2 {
    top: 537px;
    left: 1207px;
}

.callout {
    position: absolute;
    top: 266px;
    left: 414px;
    width: 321px;
    padding: 7px 0 5px;
    border-radius: 12px;
    background: #70ad47;
    color: #fff;
    font: 300 30px/37px Inter, sans-serif;
    text-align: center;
}

.pointer {
    position: absolute;
    top: 157px;
    left: 340px;
    width: 86px;
    height: 120px;
    stroke: #ff0;
    stroke-width: 4;
}

.pointer circle {
    fill: #ff0;
    stroke: none;
}
```
FILE: toolbars.js
```js
// each entry is one button, listing the shapes stacked on it; a single capital is a letter badge
const tools = [
    ['column', 'dim info', 'bar down', 'deck down', 'ibeam down', 'pile down', 'piles down', 'target down', 'hatch menu', 'bar menu', 'deck menu', 'ibeam menu', 'pile2 menu', 'terrain menu'],
    ['dim info', 'diag info', 'arc info', 'circledim info', 'circledim info', 'angle info', 'cube', 'pyramid', 'dim R', 'diag R', 'arc R', 'spline info'],
    ['frame', 'frame2 bulb', 'bar spin', 'deck spin', 'ibeam spin', 'pile spin', 'piles spin', 'bar half', 'gauge half'],
    ['table R', 'table T', 'table S', 'table C', 'table L'],
    ['vlines', 'vlinesx cross', 'section', 'section gear', 'split', 'leader person', 'leader2 person', 'leader3 person', 'leader list', 'dim list', 'sheet gear', 'corners gear', 'export', 'window trash', 'gears gear', 'window lock', 'window unlock', 'pdf gear', '!bridge person', 'book', 'hat', 'table hatsmall', 'hat L'],
];

const edit = ['centerline', 'boxbeam', 'tag', 'pick', 'stack', 'line1', 'lines', 'rotate', 'scale', 'spread', 'spread2'];

const grip = '<span class="grip"></span>';
const more = '<button class="more" aria-label="More"><svg viewBox="0 0 8 8"><path d="M1 0h6v1H1zM1 3h6L4 7z"/></svg></button>';

function shape(id) {
    if (id.length > 1) return `<use href="#${id}"/>`;
    return `<rect x="10" y="10" width="10" height="10" fill="#272928" stroke="none"/><rect x="11.5" y="10.5" width="8" height="8"/><text x="13" y="18" font-size="8" font-weight="bold">${id}</text>`;
}

function tool(entry) {
    const bright = entry.startsWith('!');
    const ids = entry.replace('!', '').split(' ');
    return `<button class="tool${bright ? ' bright' : ''}" aria-label="${ids.join(' ')}"><svg viewBox="0 0 20 20">${ids.map(shape).join('')}</svg></button>`;
}

document.getElementById('strip-tools').innerHTML = tools.map((group) => grip + group.map(tool).join('') + more).join('');
document.getElementById('strip-edit').innerHTML = grip + edit.map(tool).join('');
```
